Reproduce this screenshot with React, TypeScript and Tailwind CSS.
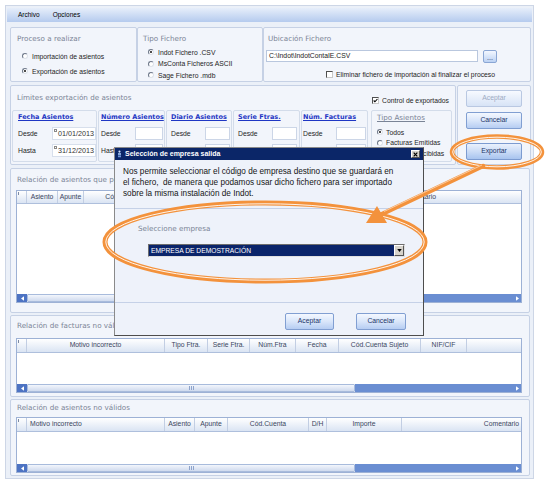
import React from "react";

const TITLE = "font-['DejaVu_Sans',Verdana,sans-serif] text-[7.2px] leading-[9px] text-[#7a8496] whitespace-nowrap";
const TXT = "text-[6.8px] leading-[9px] text-[#1e1e1e] whitespace-nowrap";
const LINK = "font-['DejaVu_Sans',Verdana,sans-serif] font-bold text-[6.5px] leading-[9px] text-[#1f37c4] underline whitespace-nowrap";
const BOX = "border border-[#c6d1e5] rounded-[2px] bg-[#f2f5fb]";

function Radio({ checked }: { checked?: boolean }) {
  return (
    <span className="w-[6px] h-[6px] shrink-0 rounded-full border border-[#6d7789] border-r-[#dde2ea] border-b-[#dde2ea] bg-white flex items-center justify-center">
      {checked && <span className="w-[2px] h-[2px] rounded-full bg-[#111]" />}
    </span>
  );
}

function Check({ checked }: { checked?: boolean }) {
  return (
    <span className="w-[7px] h-[7px] shrink-0 border border-[#4f4f4f] border-r-[#c9c9c9] border-b-[#c9c9c9] bg-white flex items-center justify-center">
      {checked && (
        <svg viewBox="0 0 6 6" className="w-[5px] h-[5px]">
          <path d="M0.8 3 L2.3 4.5 L5.3 1.2" stroke="#000" strokeWidth="1.3" fill="none" />
        </svg>
      )}
    </span>
  );
}

function RadioRow({ checked, label, rowCls, gapCls }: { checked?: boolean; label: string; rowCls: string; gapCls: string }) {
  return (
    <div className={`flex items-center ${rowCls} ${gapCls}`}>
      <Radio checked={checked} />
      <span className={TXT}>{label}</span>
    </div>
  );
}

function Field({ cls, value }: { cls: string; value?: string }) {
  if (value)
    return (
      <div className={`${cls} h-[13px] shrink-0 bg-white border border-[#d7dfec] flex items-start pl-[1px]`}>
        <span className="mt-[1px] w-[3px] h-[3px] border-[0.5px] border-[#8a8a8a]" />
        <span className="ml-[1px] text-[7.2px] leading-[12px] text-[#333] whitespace-nowrap">{value}</span>
      </div>
    );
  return <div className={`${cls} h-[13px] shrink-0 bg-white border border-[#ccd6e7]`} />;
}

function SubBox({
  boxCls,
  title,
  inputCls,
  d1,
  d2,
}: {
  boxCls: string;
  title: string;
  inputCls: string;
  d1?: string;
  d2?: string;
}) {
  return (
    <div className={`${boxCls} h-[52px] shrink-0 border border-[#d3dcea] rounded-[2px] flex flex-col pt-[2px]`}>
      <span className={LINK}>{title}</span>
      <div className="mt-[5px] h-[13px] flex items-center justify-between">
        <span className={TXT}>Desde</span>
        <Field cls={inputCls} value={d1} />
      </div>
      <div className="mt-[4px] h-[13px] flex items-center justify-between">
        <span className={TXT}>Hasta</span>
        <Field cls={inputCls} value={d2} />
      </div>
    </div>
  );
}

function Btn({ label, cls, variant }: { label: string; cls: string; variant: "off" | "on" | "strong" }) {
  const v =
    variant === "off"
      ? "border-[#b9c8e2] from-[#f7faff] to-[#d7e3f6] text-[#9eabc3]"
      : variant === "strong"
      ? "border-[#7c9bd0] from-[#eaf1fd] via-[#cbdcf6] to-[#a8c4ef] text-[#1a3368]"
      : "border-[#819fd2] from-[#f4f8ff] via-[#d9e6fa] to-[#b6cdf2] text-[#1a3368]";
  return (
    <div className={`${cls} shrink-0 rounded-[2px] border bg-gradient-to-b ${v} flex items-center justify-center text-[6.8px]`}>
      {label}
    </div>
  );
}

type Col = { cls: string; label?: string };

function TriLeft() {
  return (
    <svg viewBox="0 0 4 6" className="w-[3px] h-[5px]">
      <path d="M4 0 L0 3 L4 6 Z" fill="#fff" />
    </svg>
  );
}
function TriRight() {
  return (
    <svg viewBox="0 0 4 6" className="w-[3px] h-[5px]">
      <path d="M0 0 L4 3 L0 6 Z" fill="#fff" />
    </svg>
  );
}

function Grid({ cols, cls, headCls }: { cols: Col[]; cls: string; headCls: string }) {
  return (
    <div className={`${cls} ml-[5px] w-[506px] shrink-0 border border-[#9db1d5] bg-white flex flex-col`}>
      <div className={`${headCls} shrink-0 flex border-b border-[#aebfdc] bg-gradient-to-b from-white to-[#dae4f3]`}>
        <div className="w-[10px] shrink-0 border-r border-[#c2cee3] relative">
          <span className="absolute left-[1px] top-[1px] w-[1px] h-[3px] bg-[#7d8aa3]" />
        </div>
        {cols.map((c, i) => (
          <div key={i} className={`${c.cls} h-full flex items-center text-[6.8px] text-[#3a4560] whitespace-nowrap overflow-hidden`}>
            {c.label}
          </div>
        ))}
      </div>
      <div className="flex-1" />
      <div className="h-[8px] shrink-0 flex">
        <div className="w-[10px] shrink-0 bg-[#4d73c3] flex items-center justify-center">
          <TriLeft />
        </div>
        <div className="w-[328px] shrink-0 border border-[#a8bbdc] rounded-[1px] bg-gradient-to-b from-[#f3f6fc] to-[#cfdaee] flex items-center justify-center gap-[1px]">
          <span className="w-[1px] h-[4px] bg-[#8ea4cc]" />
          <span className="w-[1px] h-[4px] bg-[#8ea4cc]" />
          <span className="w-[1px] h-[4px] bg-[#8ea4cc]" />
        </div>
        <div className="flex-1 bg-[#6a8ed2]" />
        <div className="w-[8px] shrink-0 bg-[#6a8ed2] flex items-center justify-center">
          <TriRight />
        </div>
      </div>
    </div>
  );
}

const C = "shrink-0 border-r border-[#c2cee3] justify-center";

const cols3: Col[] = [
  { cls: `w-[31px] ${C}`, label: "Asiento" },
  { cls: `w-[26px] ${C}`, label: "Apunte" },
  { cls: `w-[80px] ${C}`, label: "Cód.Cuenta" },
  { cls: `w-[20px] ${C}`, label: "D/H" },
  { cls: `w-[80px] ${C}`, label: "Importe" },
  { cls: `w-[134px] ${C}`, label: "Concepto" },
  { cls: "flex-1 justify-start pl-[3px]", label: "Comentario" },
];

const cols4: Col[] = [
  { cls: `w-[138px] ${C}`, label: "Motivo incorrecto" },
  { cls: `w-[43px] ${C}`, label: "Tipo Ftra." },
  { cls: `w-[42px] ${C}`, label: "Serie Ftra." },
  { cls: `w-[46px] ${C}`, label: "Núm.Ftra" },
  { cls: `w-[43px] ${C}`, label: "Fecha" },
  { cls: `w-[82px] ${C}`, label: "Cód.Cuenta Sujeto" },
  { cls: `w-[46px] ${C}`, label: "NIF/CIF" },
  { cls: "flex-1" },
];

const cols5: Col[] = [
  { cls: "w-[138px] shrink-0 border-r border-[#c2cee3] justify-start pl-[3px]", label: "Motivo incorrecto" },
  { cls: `w-[30px] ${C}`, label: "Asiento" },
  { cls: `w-[33px] ${C}`, label: "Apunte" },
  { cls: `w-[81px] ${C}`, label: "Cód.Cuenta" },
  { cls: `w-[18px] ${C}`, label: "D/H" },
  { cls: `w-[75px] ${C}`, label: "Importe" },
  { cls: "flex-1 justify-end pr-[2px]", label: "Comentario" },
];

function Dialog() {
  return (
    <div className="absolute left-[114px] top-[147px] w-[310px] h-[189px] border border-[#4d4d4d] border-l-[#8a8a8a] border-t-[#8a8a8a] bg-[#eef2fa] flex flex-col">
      <div className="h-[12px] shrink-0 bg-[#0b2668] flex items-center pl-[2px] pr-[3px]">
        <svg viewBox="0 0 6 9" className="w-[5px] h-[8px]">
          <circle cx="3" cy="1.6" r="1.3" fill="#cfe0ff" />
          <rect x="1.2" y="3.5" width="3.6" height="2" fill="#9fc0f0" />
          <rect x="1.2" y="6.2" width="3.6" height="2.2" fill="#6f96d8" />
        </svg>
        <span className="ml-[3px] text-white font-bold text-[7px] leading-[12px] whitespace-nowrap">Selección de empresa salida</span>
        <span className="ml-auto w-[9px] h-[8px] bg-[#d6d3cb] border border-[#fff] border-r-[#555] border-b-[#555] flex items-center justify-center">
          <svg viewBox="0 0 6 6" className="w-[5px] h-[5px]">
            <path d="M0.8 0.8 L5.2 5.2 M5.2 0.8 L0.8 5.2" stroke="#000" strokeWidth="1.4" />
          </svg>
        </span>
      </div>
      <div className="h-[49px] shrink-0 border-b border-[#c5d1e7] pl-[8px] pt-[5.5px] text-[8.2px] leading-[11px] text-[#151515] whitespace-nowrap">
        Nos permite seleccionar el código de empresa destino que se guardará en
        <br />
        el fichero,&nbsp; de manera que podamos usar dicho fichero para ser importado
        <br />
        sobre la misma instalación de Indot.
      </div>
      <div className="h-[94px] shrink-0 border-b border-[#c5d1e7] flex flex-col">
        <span className={`${TITLE} ml-[23px] mt-[14.5px]`}>Seleccione empresa</span>
        <div className="ml-[33px] mt-[11.5px] w-[257px] h-[13px] flex border border-[#6d6d6d] border-r-[#e0e0e0] border-b-[#e0e0e0] bg-[#0a246a]">
          <span className="flex-1 pl-[2px] text-white text-[6.7px] leading-[11px] whitespace-nowrap">EMPRESA DE DEMOSTRACIÓN</span>
          <span className="w-[10px] h-[11px] bg-[#d6d3cb] border border-[#fff] border-r-[#555] border-b-[#555] flex items-center justify-center">
            <svg viewBox="0 0 6 4" className="w-[5px] h-[3px]">
              <path d="M0 0 L6 0 L3 4 Z" fill="#000" />
            </svg>
          </span>
        </div>
      </div>
      <div className="flex-1 flex justify-end items-start pt-[10px] pr-[17px] gap-[22px]">
        <Btn label="Aceptar" cls="w-[49px] h-[17px]" variant="on" />
        <Btn label="Cancelar" cls="w-[50px] h-[17px]" variant="on" />
      </div>
    </div>
  );
}

function Overlay() {
  const o = "#f3923c";
  return (
    <svg className="absolute left-0 top-0 pointer-events-none" width="548" height="483" viewBox="0 0 548 483">
      <g fill="none">
        <ellipse cx="265" cy="242" rx="160" ry="39" stroke={o} strokeWidth="5" />
        <ellipse cx="265" cy="242" rx="159.2" ry="38.2" stroke="#fff" strokeWidth="0.9" />
        <ellipse cx="497" cy="152" rx="45" ry="15.5" stroke={o} strokeWidth="4.5" />
        <ellipse cx="497" cy="152" rx="44.3" ry="14.8" stroke="#fff" strokeWidth="0.9" />
        <line x1="483" y1="166" x2="380" y2="215" stroke={o} strokeWidth="4.5" strokeLinecap="round" />
        <line x1="482" y1="165" x2="384" y2="211.5" stroke="#fde2c8" strokeWidth="0.7" />
        <polygon points="366,223 377,206 387,223" fill={o} />
      </g>
    </svg>
  );
}

export default function App() {
  return (
    <div className="relative w-[548px] h-[483px] overflow-hidden bg-white pl-[5px] pt-[5px] font-['Liberation_Sans',Arial,sans-serif] text-[#1e1e1e]">
      <div className="w-[529px] h-[474px] border border-[#cdd6e6] bg-[#ebf0f8] flex flex-col">
        {/* Menu bar */}
        <div className="ml-[1px] mt-[2px] w-[525px] h-[14px] shrink-0 bg-gradient-to-b from-[#e6eefa] to-[#b5cbee] flex items-center pl-[11px] gap-[13px] text-[6.5px] text-black">
          <span>Archivo</span>
          <span>Opciones</span>
        </div>

        <div className="pl-[4px] flex flex-col">
          {/* Row 1 */}
          <div className="mt-[5px] h-[55px] flex">
            <div className={`${BOX} w-[127px] h-full flex flex-col`}>
              <span className={`${TITLE} ml-[6px] mt-[5.5px]`}>Proceso a realizar</span>
              <RadioRow label="Importación de asientos" rowCls="ml-[11px] mt-[8.5px] h-[10px]" gapCls="gap-[4px]" />
              <RadioRow checked label="Exportación de asientos" rowCls="ml-[11px] mt-[5px] h-[10px]" gapCls="gap-[4px]" />
            </div>
            <div className={`${BOX} w-[126px] h-full flex flex-col`}>
              <span className={`${TITLE} ml-[5px] mt-[5.5px]`}>Tipo Fichero</span>
              <RadioRow checked label="Indot Fichero .CSV" rowCls="ml-[10px] mt-[4px] h-[11.5px]" gapCls="gap-[4px]" />
              <RadioRow label="MsConta Ficheros ASCII" rowCls="ml-[10px] h-[11.5px]" gapCls="gap-[4px]" />
              <RadioRow label="Sage Fichero .mdb" rowCls="ml-[10px] h-[11.5px]" gapCls="gap-[4px]" />
            </div>
            <div className={`${BOX} w-[268px] h-full flex flex-col`}>
              <span className={`${TITLE} ml-[4px] mt-[5.5px]`}>Ubicación Fichero</span>
              <div className="ml-[2px] mt-[7.5px] flex items-start">
                <div className="w-[212px] h-[12px] bg-white border border-[#b9c7de] pl-[2px] text-[6.8px] leading-[10px] text-[#222] whitespace-nowrap">
                  C:\Indot\IndotContaIE.CSV
                </div>
                <div className="ml-[5px] w-[14px] h-[13px] rounded-[2px] border border-[#8aa6d4] bg-gradient-to-b from-[#f3f7ff] to-[#bcd2f3] flex items-end justify-center text-[7px] leading-[9px] text-[#1a3368]">
                  ...
                </div>
              </div>
              <div className="ml-[62px] mt-[7px] h-[9px] flex items-center gap-[3px]">
                <Check />
                <span className={TXT}>Eliminar fichero de importación al finalizar el proceso</span>
              </div>
            </div>
          </div>

          {/* Row 2 */}
          <div className="mt-[3px] h-[80px] flex gap-[1px]">
            <div className={`${BOX} w-[446px] h-full flex flex-col`}>
              <div className="h-[12px] mt-[6.5px] flex items-start pl-[6px] pr-[6px]">
                <span className={TITLE}>Límites exportación de asientos</span>
                <div className="ml-auto mt-[3px] h-[9px] flex items-center gap-[3px]">
                  <Check checked />
                  <span className={TXT}>Control de exportados</span>
                </div>
              </div>
              <div className="ml-[1px] mt-[5.5px] flex gap-[1px]">
                <SubBox boxCls="w-[85px] pl-[5px] pr-[0px]" title="Fecha Asientos" inputCls="w-[44px]" d1="01/01/2013" d2="31/12/2013" />
                <SubBox boxCls="w-[67px] pl-[2px] pr-[1px]" title="Número Asientos" inputCls="w-[28px]" />
                <SubBox boxCls="w-[66px] pl-[4px] pr-[1px]" title="Diario Asientos" inputCls="w-[25px]" />
                <SubBox boxCls="w-[67px] pl-[4px] pr-[2px]" title="Serie Ftras." inputCls="w-[25px]" />
                <SubBox boxCls="w-[67px] pl-[1px] pr-[1px]" title="Núm. Facturas" inputCls="w-[30px]" />
                <div className="ml-[2px] w-[81px] h-[52px] shrink-0 border border-[#d3dcea] rounded-[2px] flex flex-col pt-[2px] pl-[5px]">
                  <span className={`${TITLE} underline`}>Tipo Asientos</span>
                  <RadioRow checked label="Todos" rowCls="mt-[5px] h-[10.5px]" gapCls="gap-[3px]" />
                  <RadioRow label="Facturas Emitidas" rowCls="h-[10.5px]" gapCls="gap-[3px]" />
                  <RadioRow label="Facturas Recibidas" rowCls="h-[10.5px]" gapCls="gap-[3px]" />
                </div>
              </div>
            </div>
            <div className={`${BOX} w-[74px] h-full flex flex-col pl-[8px] pt-[4px]`}>
              <Btn label="Aceptar" cls="w-[56px] h-[17px]" variant="off" />
              <Btn label="Cancelar" cls="mt-[5px] w-[56px] h-[17px]" variant="on" />
              <Btn label="Exportar" cls="mt-[14px] w-[56px] h-[17px]" variant="strong" />
            </div>
          </div>

          {/* Row 3 */}
          <div className={`${BOX} mt-[3px] w-[520px] h-[145px] flex flex-col`}>
            <span className={`${TITLE} ml-[6px] mt-[5.5px]`}>Relación de asientos que pueden ser exportados</span>
            <div className="mt-[6.5px]">
              <Grid cols={cols3} cls="h-[113px]" headCls="h-[13px]" />
            </div>
          </div>

          {/* Row 4 */}
          <div className={`${BOX} mt-[2px] w-[520px] h-[82px] flex flex-col`}>
            <span className={`${TITLE} ml-[6px] mt-[5px]`}>Relación de facturas no válidas</span>
            <div className="mt-[8px]">
              <Grid cols={cols4} cls="h-[55px]" headCls="h-[14px]" />
            </div>
          </div>

          {/* Row 5 */}
          <div className={`${BOX} mt-[2px] w-[520px] h-[77px] flex flex-col`}>
            <span className={`${TITLE} ml-[6px] mt-[2.5px]`}>Relación de asientos no válidos</span>
            <div className="mt-[5.5px]">
              <Grid cols={cols5} cls="h-[56px]" headCls="h-[14px]" />
            </div>
          </div>
        </div>
      </div>

      <Dialog />
      <Overlay />
    </div>
  );
}
